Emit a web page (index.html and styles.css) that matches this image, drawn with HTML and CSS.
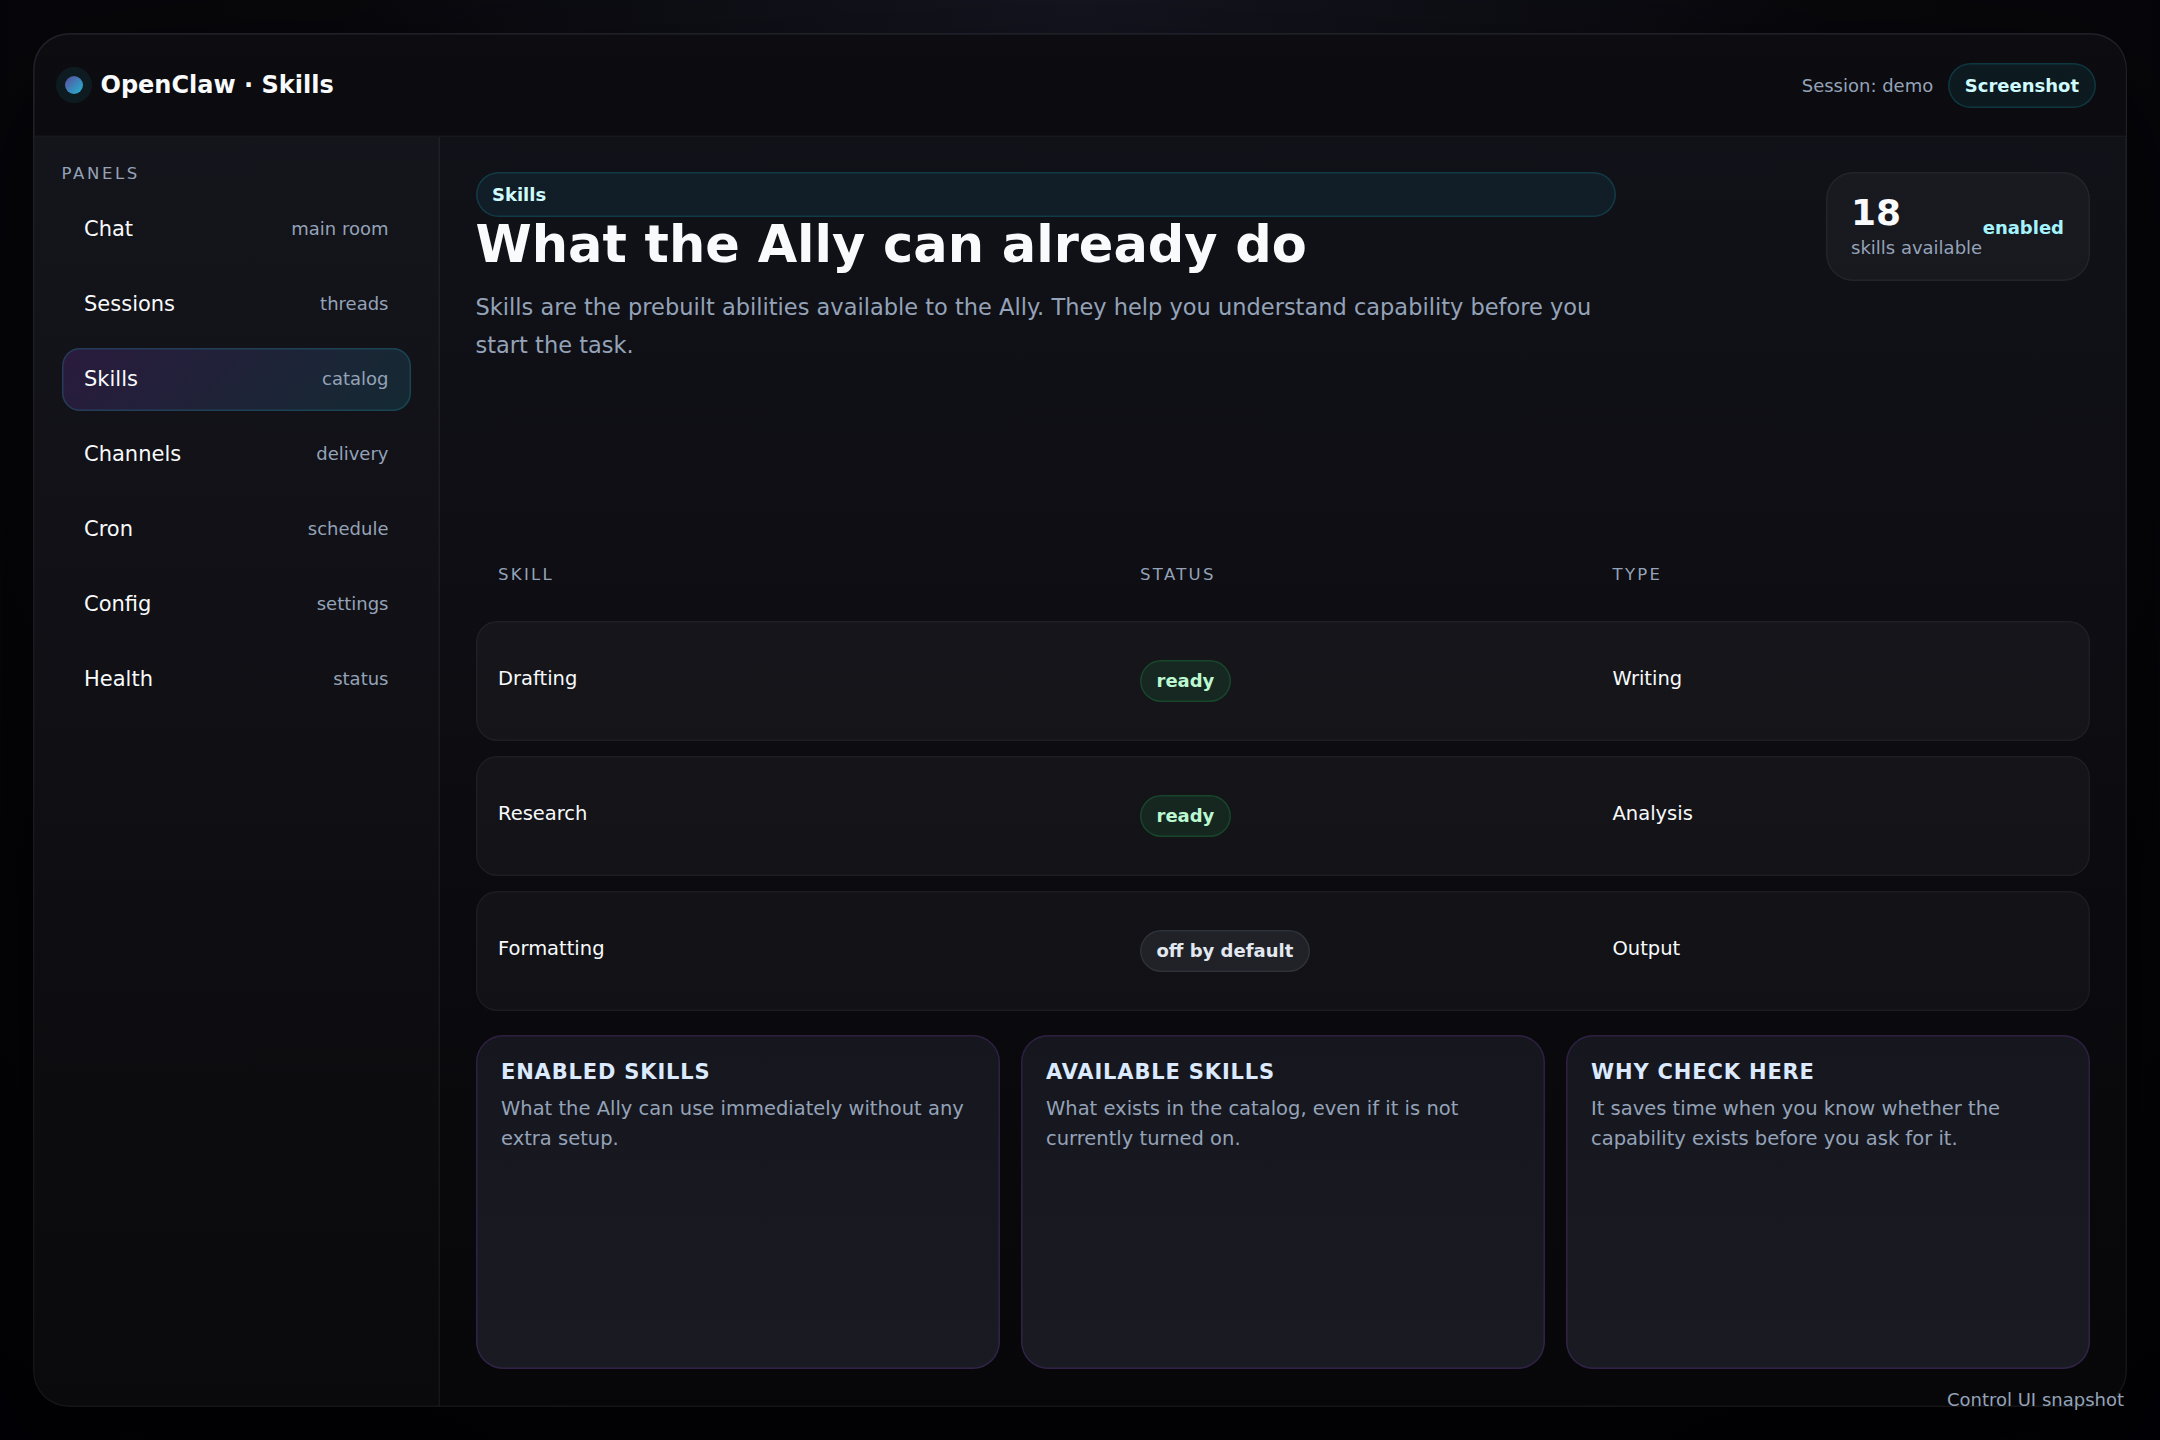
FILE: index.html
```html
<!DOCTYPE html>
<html lang="en">
<head>
<meta charset="utf-8">
<title>OpenClaw · Skills</title>
<link rel="stylesheet" href="styles.css">
</head>
<body>
<div class="shell">
  <header class="topbar">
    <div class="brand"><span class="dot"></span>OpenClaw · Skills</div>
    <div class="session"><span>Session: demo</span><span class="pill">Screenshot</span></div>
  </header>
  <div class="body">
    <nav class="sidebar">
      <div class="label">PANELS</div>
      <div class="nav">
        <div class="item"><span>Chat</span><small>main room</small></div>
        <div class="item"><span>Sessions</span><small>threads</small></div>
        <div class="item active"><span>Skills</span><small>catalog</small></div>
        <div class="item"><span>Channels</span><small>delivery</small></div>
        <div class="item"><span>Cron</span><small>schedule</small></div>
        <div class="item"><span>Config</span><small>settings</small></div>
        <div class="item"><span>Health</span><small>status</small></div>
      </div>
    </nav>
    <main class="main">
      <section class="hero">
        <div class="intro">
          <div class="pill">Skills</div>
          <h1>What the Ally can already do</h1>
          <p>Skills are the prebuilt abilities available to the Ally. They help you understand capability before you start the task.</p>
        </div>
        <div class="stat">
          <div><strong>18</strong><span class="caption">skills available</span></div>
          <span class="enabled">enabled</span>
        </div>
      </section>
      <section class="table">
        <div class="row head"><span>SKILL</span><span>STATUS</span><span>TYPE</span></div>
        <div class="row"><span class="cell">Drafting</span><span class="status ready">ready</span><span class="cell">Writing</span></div>
        <div class="row"><span class="cell">Research</span><span class="status ready">ready</span><span class="cell">Analysis</span></div>
        <div class="row"><span class="cell">Formatting</span><span class="status">off by default</span><span class="cell">Output</span></div>
      </section>
      <section class="cards">
        <article class="card"><h2>ENABLED SKILLS</h2><p>What the Ally can use immediately without any extra setup.</p></article>
        <article class="card"><h2>AVAILABLE SKILLS</h2><p>What exists in the catalog, even if it is not currently turned on.</p></article>
        <article class="card"><h2>WHY CHECK HERE</h2><p>It saves time when you know whether the capability exists before you ask for it.</p></article>
      </section>
    </main>
  </div>
</div>
<div class="footnote">Control UI snapshot</div>
</body>
</html>
```
FILE: styles.css
```css
/* Hairlines are 1.5px inset shadows; paddings include that 1.5px. */
* { box-sizing: border-box; }
html, body { height: 100%; margin: 0; }
body {
  padding: 33px;
  overflow: hidden;
  font-family: "DejaVu Sans", sans-serif;
  font-size: 21px;
  line-height: 24px;
  color: #f8fafc;
  background: radial-gradient(circle at top, #161622 0%, #08080c 42%, #020206 100%);
}
h1, h2, p { margin: 0; }
.shell {
  height: 100%;
  display: flex;
  flex-direction: column;
  padding: 1.5px;
  border-radius: 36px;
  background: linear-gradient(180deg, #12121a, #070709);
  box-shadow: inset 0 0 0 1.5px rgba(255, 255, 255, .06), 0 45px 150px rgba(0, 0, 0, .6);
}
.topbar {
  height: 102px;
  flex: none;
  display: flex;
  align-items: center;
  justify-content: space-between;
  padding: 0 30px 1px;
  border-radius: 34.5px 34.5px 0 0;
  box-shadow: inset 0 -1.5px 0 rgba(255, 255, 255, .05);
  background: rgba(5, 5, 7, .5);
}
.brand { display: flex; align-items: center; gap: 18px; font-size: 24px; font-weight: 700; }
.dot {
  width: 18px;
  height: 18px;
  border-radius: 50%;
  background: linear-gradient(135deg, #5b4a9c, #22b8d4);
  box-shadow: 0 0 0 9px rgba(34, 211, 238, .08);
}
.session { display: flex; align-items: center; gap: 15px; font-size: 18px; line-height: 21px; color: #94a3b8; }
.pill {
  padding: 12px 16.5px;
  border-radius: 22.5px;
  box-shadow: inset 0 0 0 1.5px rgba(34, 211, 238, .16);
  background: rgba(34, 211, 238, .07);
  color: #cffafe;
  font-size: 18px;
  line-height: 21px;
  font-weight: 700;
}
.body { flex: 1; min-height: 0; display: grid; grid-template-columns: 405px 1fr; }
.sidebar {
  padding: 27px 28.5px 27px 27px;
  border-bottom-left-radius: 34.5px;
  box-shadow: inset -1.5px 0 0 rgba(255, 255, 255, .05);
  background: rgba(255, 255, 255, .015);
}
.label { margin-bottom: 14.5px; font-size: 16.5px; line-height: 19.5px; letter-spacing: .16em; color: #94a3b8; }
.nav { display: grid; gap: 12px; }
.item {
  height: 63px;
  display: flex;
  align-items: center;
  justify-content: space-between;
  padding: 0 22.5px 1px;
  border-radius: 18px;
}
.item small { font-size: 18px; line-height: 21px; color: #94a3b8; }
.active {
  box-shadow: inset 0 0 0 1.5px rgba(34, 211, 238, .17);
  background: linear-gradient(135deg, rgba(147, 65, 225, .18), rgba(34, 211, 238, .12));
}
.main {
  padding: 35.5px 36px 36.5px;
  display: grid;
  grid-template-rows: 347.5px 467px 1fr;
  gap: 24px;
}
.hero { display: flex; align-items: flex-start; justify-content: space-between; }
.intro { width: 1140px; }
h1 { font-size: 51px; line-height: 1.1; }
.intro p { margin-top: 14.5px; font-size: 22.5px; line-height: 1.7; color: #94a3b8; }
.stat {
  width: 264px;
  display: flex;
  align-items: center;
  justify-content: space-between;
  padding: 22.5px 25.5px 23.5px;
  border-radius: 27px;
  box-shadow: inset 0 0 0 1.5px rgba(255, 255, 255, .05);
  background: rgba(255, 255, 255, .035);
  font-size: 18px;
  line-height: 21px;
}
.stat strong { display: block; margin-bottom: 6px; font-size: 36px; line-height: 1; }
.caption { display: block; color: #94a3b8; white-space: nowrap; }
.enabled { padding-top: 2px; font-weight: 700; color: #a5f3fc; }
.table { display: grid; grid-template-rows: 62px repeat(3, 120px); gap: 15px; }
.row {
  display: grid;
  grid-template-columns: 642px 472.5px 1fr;
  align-items: center;
  padding: 0 22.5px;
  border-radius: 21px;
  box-shadow: inset 0 0 0 1.5px rgba(255, 255, 255, .045);
  background: rgba(255, 255, 255, .035);
  font-size: 19.5px;
}
.cell { padding-bottom: 3px; }
.head { padding-top: 1px; box-shadow: none; background: none; font-size: 16.5px; letter-spacing: .14em; color: #94a3b8; }
.status {
  justify-self: start;
  padding: 10.5px 16.5px;
  border-radius: 21px;
  box-shadow: inset 0 0 0 1.5px rgba(148, 163, 184, .13);
  background: rgba(148, 163, 184, .1);
  color: #e2e8f0;
  font-size: 18px;
  line-height: 21px;
  font-weight: 700;
}
.ready { box-shadow: inset 0 0 0 1.5px rgba(34, 197, 94, .2); background: rgba(34, 197, 94, .11); color: #bbf7d0; }
.cards { display: grid; grid-template-columns: repeat(3, 1fr); gap: 21px; }
.card {
  padding: 25px 25.5px;
  border-radius: 27px;
  box-shadow: inset 0 0 0 1.5px rgba(168, 85, 247, .17);
  background: linear-gradient(180deg, #16161e, #1a1a23);
}
.card h2 { font-size: 21px; letter-spacing: .04em; color: #dbeafe; }
.card p { margin-top: 10.5px; font-size: 19.5px; line-height: 1.55; color: #94a3b8; }
.footnote { position: absolute; right: 36px; bottom: 30px; font-size: 18px; line-height: 21px; color: #94a3b8; }
```
